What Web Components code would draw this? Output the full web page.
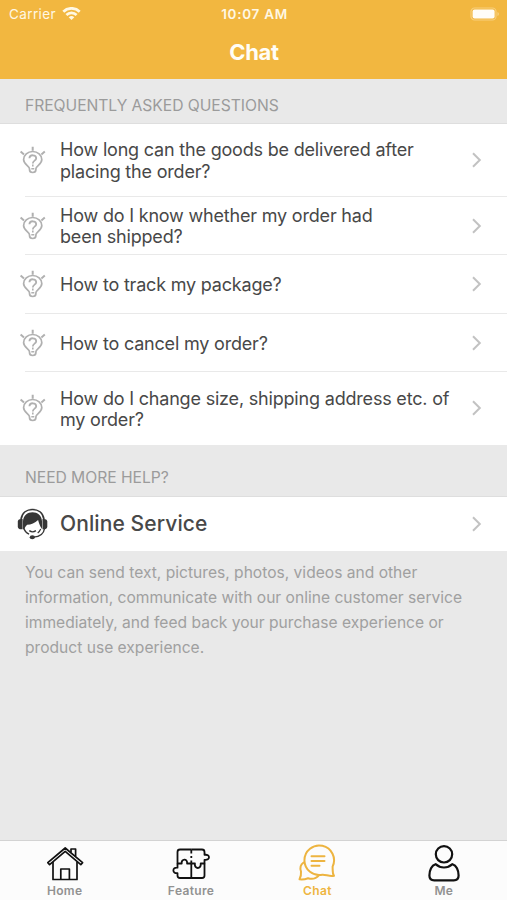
<!DOCTYPE html>
<html lang="en">
<head>
<meta charset="utf-8">
<meta name="viewport" content="width=device-width, initial-scale=1">
<title>Chat</title>
<style>
    body {
        margin: 0;
        font-family: Inter, "Liberation Sans", sans-serif;
    }
</style>
</head>
<body>
<chat-screen></chat-screen>

<script>
class StatusBar extends HTMLElement {
    connectedCallback() {
        this.attachShadow({ mode: 'open' });
        this.shadowRoot.innerHTML = `
            <style>
                :host {
                    display: grid;
                    grid-template-columns: 1fr auto 1fr;
                    align-items: center;
                    height: 27px;
                    padding: 0 7px 0 9px;
                    font-size: 13.5px;
                    line-height: 27px;
                    color: #fff8e4;
                }

                .carrier {
                    display: flex;
                    align-items: center;
                    gap: 6px;
                    letter-spacing: 0.38px;
                }

                .carrier span, .time {
                    padding-top: 1px;
                }

                .time {
                    font-weight: 600;
                    letter-spacing: 0.7px;
                    font-size: 13.5px;
                }

                .battery {
                    justify-self: end;
                }

                svg {
                    display: block;
                }
            </style>
            <div class="carrier">
                <span>Carrier</span>
                <svg width="19" height="14" viewBox="0 0 19 14" fill="none" stroke="#fff8e4" stroke-width="2.7">
                    <path d="M1.3 4.7a11.6 11.6 0 0 1 16.4 0"/>
                    <path d="M4.4 8a7.2 7.2 0 0 1 10.2 0"/>
                    <path d="M9.5 13L6.7 10.3a4 4 0 0 1 5.6 0z" fill="#fff8e4" stroke="none"/>
                </svg>
            </div>
            <div class="time">10:07 AM</div>
            <svg class="battery" width="30" height="14" viewBox="0 0 30 14">
                <rect x="1" y="1" width="25" height="12" rx="3.6" fill="none" stroke="#f7cf7c" stroke-width="1.2"/>
                <rect x="2.6" y="2.4" width="22" height="9.2" rx="2" fill="#fffdf8"/>
                <path d="M27.4 5v4q1.6-.5 1.6-2t-1.6-2z" fill="#f7cf7c"/>
            </svg>
        `;
    }
}

class NavBar extends HTMLElement {
    connectedCallback() {
        this.attachShadow({ mode: 'open' });
        this.shadowRoot.innerHTML = `
            <style>
                :host {
                    display: block;
                    height: 79px;
                    background: #f2b740;
                }

                h1 {
                    margin: 0;
                    padding-left: 1px;
                    font-size: 22px;
                    font-weight: 700;
                    line-height: 50px;
                    text-align: center;
                    letter-spacing: -0.3px;
                    color: #fffdf6;
                }
            </style>
            <status-bar></status-bar>
            <h1><slot></slot></h1>
        `;
    }
}

class SectionGroup extends HTMLElement {
    connectedCallback() {
        this.attachShadow({ mode: 'open' });
        this.shadowRoot.innerHTML = `
            <style>
                :host {
                    display: block;
                }

                h2 {
                    box-sizing: border-box;
                    height: var(--head-height, 52px);
                    margin: 0;
                    padding: 0 25px var(--head-bottom, 8px);
                    display: flex;
                    align-items: flex-end;
                    border-bottom: 1px solid #dedede;
                    font-size: 15.7px;
                    font-weight: 400;
                    line-height: 20px;
                    letter-spacing: -0.06px;
                    color: #9b9b9b;
                }

                .rows {
                    background: #fff;
                }
            </style>
            <h2>${this.getAttribute('heading')}</h2>
            <div class="rows"><slot></slot></div>
        `;
    }
}

class ListRow extends HTMLElement {
    connectedCallback() {
        this.attachShadow({ mode: 'open' });
        this.shadowRoot.innerHTML = `
            <style>
                :host {
                    display: block;
                }

                .row {
                    box-sizing: border-box;
                    height: var(--row-height, 58.5px);
                    display: grid;
                    grid-template-columns: 35px 1fr 12px;
                    align-items: center;
                    padding: 0 24px 0 25px;
                }

                .line {
                    height: 1px;
                    margin-left: 25px;
                    margin-top: -1px;
                    background: #e9e9e9;
                }

                :host(:last-of-type) .line {
                    display: none;
                }

                .icon {
                    margin-left: -8px;
                }

                .text {
                    padding-top: var(--text-drop, 1px);
                    font-size: var(--row-size, 18px);
                    font-weight: var(--row-weight, 400);
                    line-height: 21.6px;
                    letter-spacing: var(--row-spacing, -0.19px);
                    white-space: nowrap;
                    color: #484848;
                }

                .chevron {
                    display: block;
                }
            </style>
            <div class="row">
                <div class="icon"><slot name="icon"></slot></div>
                <div class="text"><slot></slot></div>
                <svg class="chevron" width="12" height="16" viewBox="0 0 12 16" fill="none" stroke="#c2c2c2" stroke-width="2">
                    <path d="M2 1.3L8.8 8L2 14.7"/>
                </svg>
            </div>
            <div class="line"></div>
        `;
    }
}

class BulbIcon extends HTMLElement {
    connectedCallback() {
        this.attachShadow({ mode: 'open' });
        this.shadowRoot.innerHTML = `
            <style>
                :host {
                    display: block;
                }

                svg {
                    display: block;
                }
            </style>
            <svg width="32" height="28" viewBox="0 0 32 28" fill="none" stroke="#b0b0b0" stroke-width="1.7">
                <path d="M12.5 22.8c0-2.6-5.9-4.2-5.9-9.2a9.1 8.1 0 0 1 18.2 0c0 5-5.9 6.6-5.9 9.2v.7a3.2 3 0 0 1-6.4 0z"/>
                <path d="M15.7 .8v3.9M3.6 5.5l3.4 2.9M27.8 5.5l-3.4 2.9" stroke-width="2"/>
                <path d="M12.4 12.2c.2-4 6.8-3.8 6.8 0 0 2.6-3.4 2.3-3.4 5.2" stroke-width="1.8"/>
                <path d="M15.8 18.6v1.9M14.3 22.8h3" stroke-width="1.6"/>
            </svg>
        `;
    }
}

class AgentIcon extends HTMLElement {
    connectedCallback() {
        this.attachShadow({ mode: 'open' });
        this.shadowRoot.innerHTML = `
            <style>
                :host {
                    display: block;
                }

                svg {
                    display: block;
                }
            </style>
            <svg width="32" height="32" viewBox="0 0 32 32" fill="#363636">
                <path d="M4 11.5C5 4.5 10 1.5 15.5 1.5S26 4.5 27 11.5" fill="none" stroke="#363636" stroke-width="1.7"/>
                <path d="M6 21V13C6.5 7 10.5 4.2 15.5 4.2S24.6 7 25 13v8l-1.6-2.5c-.8-2.2-1.9-4.6-2.3-6.6-3.2 3.2-7 4.6-11 4.8-1.2 1.1-2.2 2.7-3 4.8z"/>
                <path d="M5.6 11v10.2H4.2c-1.8 0-3.1-.9-3.4-2.3v-5.6c.3-1.4 1.6-2.3 3.4-2.3zM25.5 11v10.2h1.4c1.8 0 3.1-.9 3.4-2.3v-5.6c-.3-1.4-1.6-2.3-3.4-2.3z"/>
                <path d="M6.5 19.5c1.1 3.6 3 5.7 5.6 6.7M27.5 20.5c-.7 5.2-5 8.3-11 8.6M12.3 22.6q3.3 2.5 6.6 0" fill="none" stroke="#363636" stroke-width="1.4"/>
                <path d="M23.7 21c-.7 1.7-1.7 3-3 4" fill="none" stroke="#363636" stroke-width="1.2"/>
                <ellipse cx="15.3" cy="29.2" rx="2.6" ry="2"/>
            </svg>
        `;
    }
}

class TabItem extends HTMLElement {
    connectedCallback() {
        this.attachShadow({ mode: 'open' });
        this.shadowRoot.innerHTML = `
            <style>
                :host {
                    display: flex;
                    flex-direction: column;
                    align-items: center;
                    padding-top: 3px;
                    color: #929292;
                }

                :host([active]) {
                    color: #eeb53f;
                }

                .label {
                    font-size: 12px;
                    font-weight: 600;
                    line-height: 14px;
                    letter-spacing: 0.35px;
                }
            </style>
            <slot name="icon"></slot>
            <div class="label"><slot></slot></div>
        `;
    }
}

class TabBar extends HTMLElement {
    connectedCallback() {
        this.attachShadow({ mode: 'open' });
        this.shadowRoot.innerHTML = `
            <style>
                :host {
                    box-sizing: border-box;
                    display: grid;
                    grid-template-columns: repeat(4, 1fr);
                    height: 60px;
                    padding-left: 1.5px;
                    background: #fcfcfc;
                    border-top: 1px solid #d3d3d3;
                }
            </style>
            <tab-item>
                <svg slot="icon" width="40" height="40" viewBox="0 0 40 40" fill="none" stroke="#111" stroke-width="1.7" stroke-linejoin="round">
                    <path d="M2.8 18.6L20.2 4l17.4 14.6-1.8 2L20.2 7.4 4.6 20.6z"/>
                    <path d="M8 18v17.5h24V18M26 8.5V5h4.6v7.3M15.8 35.3V25h8.6v10.3"/>
                </svg>
                Home
            </tab-item>
            <tab-item>
                <svg slot="icon" width="40" height="40" viewBox="0 0 40 40" fill="none" stroke="#111" stroke-width="1.8" stroke-linejoin="round">
                    <path d="M20.3 5.5H9q-2.5 0-2.5 2.5V19.5h4.2c-.7-5 6-5.5 5.4 0h4.2"/>
                    <path d="M6.5 19.5v4.2c-5.5-.8-5.5 6.2 0 5.4v2.4Q6.5 34 9 34h11.3V19.5"/>
                    <path d="M20.3 5.5H31q2.5 0 2.5 2.5v2.8c6-.8 6 5.9 0 5.1V19.5h-3.8c.8 6-6.6 6-5.8 0h-3.6"/>
                    <path d="M33.5 19.5v12q0 2.5-2.5 2.5H20.3"/>
                    <path d="M20.3 5.5v4M20.3 12v2M20.3 16.5v3"/>
                </svg>
                Feature
            </tab-item>
            <tab-item active>
                <svg slot="icon" width="40" height="40" viewBox="0 0 40 40" fill="none" stroke="#edb440" stroke-width="2" stroke-linejoin="round" stroke-linecap="round">
                    <path d="M35.6 22.6A14.8 14.8 0 1 0 25.5 30.7C29 30.5 32.5 32.8 37 31.8 35.2 29.3 35.8 25.5 35.6 22.6z"/>
                    <path d="M6.6 18.5C3.7 20.5 2.8 24 4 27.5c.3 3.3-.3 5.7-1.5 7.8 3.2.4 6-.1 8.6-1.1 4.6 1.5 8.2.2 11-3.1"/>
                    <path d="M14.5 12.3h13M14.5 17h13M14.5 21.8h8"/>
                </svg>
                Chat
            </tab-item>
            <tab-item>
                <svg slot="icon" width="40" height="40" viewBox="0 0 40 40" fill="none" stroke="#111" stroke-width="2.2" stroke-linejoin="round">
                    <circle cx="20" cy="10.3" r="8.2"/>
                    <path d="M11.5 20.2c5 4.4 12 4.4 17 0 3.8 1 6.1 6.2 6.1 11.3 0 3-1.8 4.8-4.8 4.8H10.2c-3 0-4.8-1.8-4.8-4.8 0-5.1 2.3-10.3 6.1-11.3z"/>
                </svg>
                Me
            </tab-item>
        `;
    }
}

class ChatScreen extends HTMLElement {
    connectedCallback() {
        this.attachShadow({ mode: 'open' });
        this.shadowRoot.innerHTML = `
            <style>
                :host {
                    display: flex;
                    flex-direction: column;
                    height: 900px;
                    background: #e9e9e9;
                    overflow: hidden;
                }

                main {
                    flex: 1;
                }

                .faq {
                    --head-height: 45px;
                    --head-bottom: 7px;
                }

                .tall {
                    --row-height: 72.5px;
                }

                .low {
                    --text-drop: 2px;
                }

                .help {
                    --row-height: 54px;
                    --row-size: 21px;
                    --row-weight: 500;
                    --row-spacing: 0.1px;
                }

                p {
                    margin: 9px 25px 0;
                    font-size: 15.6px;
                    line-height: 25px;
                    white-space: nowrap;
                    color: #a0a0a0;
                }
            </style>
            <nav-bar>Chat</nav-bar>
            <main>
                <section-group class="faq" heading="FREQUENTLY ASKED QUESTIONS">
                    <list-row class="tall"><bulb-icon slot="icon"></bulb-icon>How long can the goods be delivered after<br>placing the order?</list-row>
                    <list-row><bulb-icon slot="icon"></bulb-icon>How do I know whether my order had<br>been shipped?</list-row>
                    <list-row><bulb-icon slot="icon"></bulb-icon>How to track my package?</list-row>
                    <list-row class="low"><bulb-icon slot="icon"></bulb-icon>How to cancel my order?</list-row>
                    <list-row class="tall low"><bulb-icon slot="icon"></bulb-icon>How do I change size, shipping address etc. of<br>my order?</list-row>
                </section-group>
                <section-group class="help" heading="NEED MORE HELP?">
                    <list-row><agent-icon slot="icon"></agent-icon>Online Service</list-row>
                </section-group>
                <p>You can send text, pictures, photos, videos and other<br>information, communicate with our online customer service<br>immediately, and feed back your purchase experience or<br>product use experience.</p>
            </main>
            <tab-bar></tab-bar>
        `;
    }
}

customElements.define('status-bar', StatusBar);
customElements.define('nav-bar', NavBar);
customElements.define('bulb-icon', BulbIcon);
customElements.define('agent-icon', AgentIcon);
customElements.define('list-row', ListRow);
customElements.define('section-group', SectionGroup);
customElements.define('tab-item', TabItem);
customElements.define('tab-bar', TabBar);
customElements.define('chat-screen', ChatScreen);
</script>
</body>
</html>
